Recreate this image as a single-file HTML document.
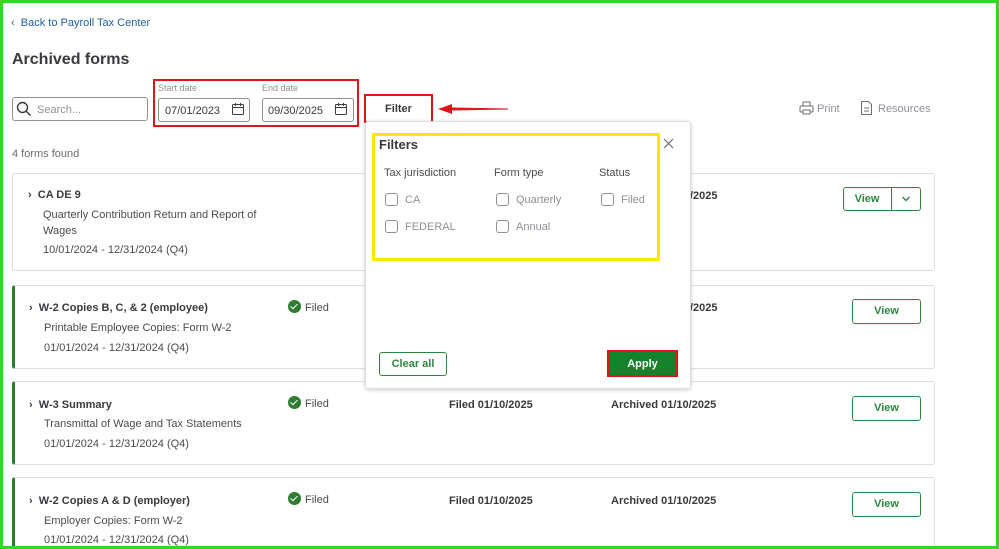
<!DOCTYPE html>
<html style="width:999px;height:549px;overflow:hidden"><head><style>
*{box-sizing:border-box;margin:0;padding:0}
body{width:999px;height:549px;overflow:hidden;background:#fff;font-family:"Liberation Sans",sans-serif;position:relative;color:#393a3d}
.a{position:absolute;white-space:nowrap}
.frame{position:absolute;left:0;top:0;width:999px;height:549px;border:3px solid #2ddc1e;z-index:20;pointer-events:none}
.card{position:absolute;left:12px;width:923px;border:1px solid #dcdde0;border-radius:3px;background:#fff}
.card.g{border-left:3px solid #2c7d2e}
.t{font-size:11px;font-weight:bold;color:#393a3d;margin-top:2px}
.s{font-size:11px;color:#4a4b4f;margin-top:2px}
.btn{position:absolute;border:1px solid #2e8540;border-radius:3px;color:#2e8540;font-weight:bold;font-size:11px;text-align:center;background:#fff}
.cb{position:absolute;width:13px;height:13px;border:1px solid #8d9096;border-radius:3px}
.lbl{font-size:11px;color:#8d9096;margin-top:2px}
.m{margin-top:2px}
.chk{display:inline-block;width:13px;height:13px;border-radius:50%;background:#2c7d2e;vertical-align:-2px;margin-right:4px;position:relative}
.chk:after{content:"";position:absolute;left:4px;top:2px;width:3px;height:6px;border:solid #fff;border-width:0 1.5px 1.5px 0;transform:rotate(45deg)}
</style></head><body>
<div class="frame"></div>
<div class="a m" style="left:11px;top:15px;font-size:11px;color:#1f5f9e">‹&nbsp; Back to Payroll Tax Center</div>
<div class="a m" style="left:12px;top:49px;font-size:16px;font-weight:bold;color:#393a3d">Archived forms</div>
<div class="a" style="left:12px;top:97px;width:136px;height:24px;border:1px solid #8d9096;border-radius:3px"></div>
<svg class="a" style="left:16px;top:101px" width="16" height="16" viewBox="0 0 16 16"><circle cx="6.5" cy="6.5" r="5" fill="none" stroke="#393a3d" stroke-width="1.4"/><path d="M10 10l4.5 4.5" stroke="#393a3d" stroke-width="1.4"/></svg>
<div class="a m" style="left:37px;top:102px;font-size:11px;color:#8d9096">Search...</div>
<div class="a" style="left:153px;top:79px;width:206px;height:48px;border:2px solid #e0141b"></div>
<div class="a m" style="left:158px;top:81px;font-size:9px;color:#8d9096">Start date</div>
<div class="a m" style="left:262px;top:81px;font-size:9px;color:#8d9096">End date</div>
<div class="a" style="left:158px;top:98px;width:92px;height:24px;border:1px solid #8d9096;border-radius:3px"></div>
<div class="a" style="left:262px;top:98px;width:92px;height:24px;border:1px solid #8d9096;border-radius:3px"></div>
<div class="a m" style="left:165px;top:103px;font-size:11px;color:#393a3d">07/01/2023</div>
<div class="a m" style="left:268px;top:103px;font-size:11px;color:#393a3d">09/30/2025</div>
<svg class="a" style="left:231px;top:102px" width="14" height="14"><rect x="1.5" y="2.5" width="11" height="10" rx="1" fill="none" stroke="#393a3d"/><path d="M1.5 5.5h11M4.5 1v3M9.5 1v3" stroke="#393a3d"/></svg>
<div class="a" style="left:0;top:0"></div>
<svg class="a" style="left:334px;top:102px" width="14" height="14"><rect x="1.5" y="2.5" width="11" height="10" rx="1" fill="none" stroke="#393a3d"/><path d="M1.5 5.5h11M4.5 1v3M9.5 1v3" stroke="#393a3d"/></svg>
<div class="a" style="left:364px;top:94px;width:69px;height:29px;border:2px solid #e0141b;font-size:11px;font-weight:bold;text-align:center;line-height:27px">Filter</div>
<svg class="a" style="left:436px;top:103px" width="74" height="12"><path d="M2 6L16 1v3.5l56 1v1l-56 1V11z" fill="#e0141b"/></svg>
<svg class="a" style="left:799px;top:101px" width="15" height="14"><rect x="4" y="1" width="7" height="4" fill="none" stroke="#6b6c72"/><rect x="1" y="5" width="13" height="6" rx="1" fill="none" stroke="#6b6c72"/><rect x="4" y="9" width="7" height="4" fill="#fff" stroke="#6b6c72"/></svg>
<div class="a m" style="left:817px;top:101px;font-size:11px;color:#8d9096">Print</div>
<svg class="a" style="left:860px;top:100px" width="13" height="16"><path d="M1.5 1.5h7l3 3v10h-10z" fill="none" stroke="#6b6c72"/><path d="M4 8h5M4 11h5" stroke="#6b6c72"/></svg>
<div class="a m" style="left:878px;top:101px;font-size:11px;color:#8d9096">Resources</div>
<div class="a m" style="left:12px;top:146px;font-size:11px;color:#6b6c72">4 forms found</div>

<div class="card" style="top:173px;height:98px"></div>
<div class="a t" style="left:28px;top:187px">›&nbsp; CA DE 9</div>
<div class="a s" style="left:43px;top:207px">Quarterly Contribution Return and Report of</div>
<div class="a s" style="left:43px;top:223px">Wages</div>
<div class="a s" style="left:43px;top:242px">10/01/2024 - 12/31/2024 (Q4)</div>
<div class="a t" style="left:690px;top:188px">/2025</div>
<div class="btn" style="left:843px;top:187px;width:78px;height:24px"></div>
<div class="a" style="left:843px;top:193px;width:48px;text-align:center;font-size:11px;font-weight:bold;color:#2e8540">View</div>
<div class="a" style="left:891px;top:187px;width:1px;height:24px;background:#2e8540"></div>
<svg class="a" style="left:901px;top:195px" width="10" height="8"><path d="M1.5 2l3.5 3.5L8.5 2" fill="none" stroke="#2e8540" stroke-width="1.4"/></svg>

<div class="card g" style="top:285px;height:84px"></div>
<div class="a t" style="left:29px;top:300px">›&nbsp; W-2 Copies B, C, &amp; 2 (employee)</div>
<div class="a s" style="left:44px;top:320px">Printable Employee Copies: Form W-2</div>
<div class="a s" style="left:44px;top:340px">01/01/2024 - 12/31/2024 (Q4)</div>
<div class="a s" style="left:288px;top:298px"><span class="chk"></span>Filed</div>
<div class="a t" style="left:690px;top:300px">/2025</div>
<div class="btn" style="left:852px;top:299px;width:69px;height:25px;line-height:23px">View</div>

<div class="card g" style="top:381px;height:84px"></div>
<div class="a t" style="left:29px;top:397px">›&nbsp; W-3 Summary</div>
<div class="a s" style="left:44px;top:416px">Transmittal of Wage and Tax Statements</div>
<div class="a s" style="left:44px;top:436px">01/01/2024 - 12/31/2024 (Q4)</div>
<div class="a s" style="left:288px;top:394px"><span class="chk"></span>Filed</div>
<div class="a t" style="left:449px;top:397px">Filed 01/10/2025</div>
<div class="a t" style="left:611px;top:397px">Archived 01/10/2025</div>
<div class="btn" style="left:852px;top:396px;width:69px;height:25px;line-height:23px">View</div>

<div class="card g" style="top:477px;height:80px"></div>
<div class="a t" style="left:29px;top:493px">›&nbsp; W-2 Copies A &amp; D (employer)</div>
<div class="a s" style="left:44px;top:513px">Employer Copies: Form W-2</div>
<div class="a s" style="left:44px;top:532px">01/01/2024 - 12/31/2024 (Q4)</div>
<div class="a s" style="left:288px;top:490px"><span class="chk"></span>Filed</div>
<div class="a t" style="left:449px;top:493px">Filed 01/10/2025</div>
<div class="a t" style="left:611px;top:493px">Archived 01/10/2025</div>
<div class="btn" style="left:852px;top:492px;width:69px;height:25px;line-height:23px">View</div>

<div class="a" style="left:365px;top:121px;width:326px;height:268px;background:#fff;border:1px solid #dcdde0;border-radius:3px;box-shadow:0 1px 4px rgba(0,0,0,.2)"></div>
<div class="a" style="left:372px;top:133px;width:288px;height:128px;border:3px solid #ffe600"></div>
<div class="a m" style="left:379px;top:135px;font-size:13px;font-weight:bold">Filters</div>
<svg class="a" style="left:663px;top:138px" width="11" height="11"><path d="M1 1l9 9M10 1l-9 9" stroke="#6b6c72" stroke-width="1.2"/></svg>
<div class="a s" style="left:384px;top:165px">Tax jurisdiction</div>
<div class="a s" style="left:494px;top:165px">Form type</div>
<div class="a s" style="left:599px;top:165px">Status</div>
<div class="cb" style="left:385px;top:193px"></div><div class="a lbl" style="left:405px;top:192px">CA</div>
<div class="cb" style="left:385px;top:220px"></div><div class="a lbl" style="left:405px;top:219px">FEDERAL</div>
<div class="cb" style="left:496px;top:193px"></div><div class="a lbl" style="left:516px;top:192px">Quarterly</div>
<div class="cb" style="left:496px;top:220px"></div><div class="a lbl" style="left:516px;top:219px">Annual</div>
<div class="cb" style="left:601px;top:193px"></div><div class="a lbl" style="left:621px;top:192px">Filed</div>
<div class="btn" style="left:379px;top:352px;width:68px;height:24px;line-height:22px">Clear all</div>
<div class="a" style="left:607px;top:350px;width:71px;height:27px;border:2px solid #e0141b;background:#13822a;color:#fff;font-weight:bold;font-size:11px;text-align:center;line-height:25px">Apply</div>
</body></html>
